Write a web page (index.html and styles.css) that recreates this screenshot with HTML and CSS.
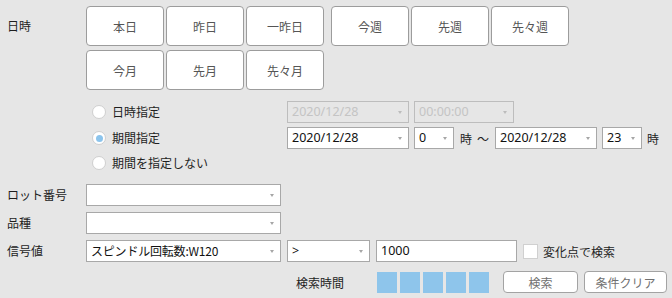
FILE: index.html
```html
<!DOCTYPE html>
<html lang="ja">
<head>
<meta charset="utf-8">
<link rel="stylesheet" href="styles.css">
</head>
<body>
<div class="page">
  <div class="dt-row">
    <div class="label dt-label">日時</div>
    <div class="quick">
      <div class="qrow">
        <div class="grp">
          <div class="qbtn">本日</div>
          <div class="qbtn">昨日</div>
          <div class="qbtn">一昨日</div>
        </div>
        <div class="grp">
          <div class="qbtn">今週</div>
          <div class="qbtn">先週</div>
          <div class="qbtn">先々週</div>
        </div>
      </div>
      <div class="qrow">
        <div class="grp">
          <div class="qbtn">今月</div>
          <div class="qbtn">先月</div>
          <div class="qbtn">先々月</div>
        </div>
      </div>
    </div>
  </div>

  <div class="radios">
    <div class="rrow">
      <div class="radio"><span class="circle"></span><span class="rtext">日時指定</span></div>
      <div class="sel dis w-date"><span class="val">2020/12/28</span><span class="arrow"></span></div>
      <div class="sel dis w-time"><span class="val">00:00:00</span><span class="arrow"></span></div>
    </div>
    <div class="rrow r2">
      <div class="radio"><span class="circle on"></span><span class="rtext">期間指定</span></div>
      <div class="sel w-date"><span class="val">2020/12/28</span><span class="arrow"></span></div>
      <div class="sel w-hour"><span class="val">0</span><span class="arrow"></span></div>
      <span class="unit">時</span>
      <span class="tilde">～</span>
      <div class="sel w-date2"><span class="val">2020/12/28</span><span class="arrow"></span></div>
      <div class="sel w-hour"><span class="val">23</span><span class="arrow"></span></div>
      <span class="unit u2">時</span>
    </div>
    <div class="rrow r3">
      <div class="radio"><span class="circle"></span><span class="rtext">期間を指定しない</span></div>
    </div>
  </div>

  <div class="frow lot">
    <div class="label">ロット番号</div>
    <div class="sel w-main"><span class="val"></span><span class="arrow"></span></div>
  </div>
  <div class="frow kind">
    <div class="label">品種</div>
    <div class="sel w-main"><span class="val"></span><span class="arrow"></span></div>
  </div>
  <div class="frow sig">
    <div class="label">信号値</div>
    <div class="sel w-main"><span class="val jp">スピンドル回転数:W120</span><span class="arrow"></span></div>
    <div class="sel w-op"><span class="val">&gt;</span><span class="arrow"></span></div>
    <div class="inp"><span class="val">1000</span></div>
    <div class="check"></div>
    <span class="ctext">変化点で検索</span>
  </div>

  <div class="brow">
    <div class="btime">検索時間</div>
    <div class="blocks">
      <span class="blk"></span><span class="blk"></span><span class="blk"></span><span class="blk"></span><span class="blk"></span>
    </div>
    <div class="abtn search">検索</div>
    <div class="abtn clear">条件クリア</div>
  </div>
</div>
</body>
</html>
```

FILE: styles.css
```css
* { box-sizing: border-box; }
html, body {
  margin: 0;
  padding: 0;
  background: #e6e6e6;
}
body {
  width: 672px;
  height: 298px;
  overflow: hidden;
  font-family: "Noto Sans CJK JP", "Noto Sans", sans-serif;
  font-size: 12px;
  color: #1e1e1e;
}
.page {
  padding-top: 6px;
}
.label {
  width: 86px;
  padding-left: 7px;
  flex: none;
  font-size: 12px;
  line-height: 14px;
}
.dt-row {
  display: flex;
}
.dt-label {
  height: 40px;
  display: flex;
  align-items: center;
}
.quick {
  display: flex;
  flex-direction: column;
  gap: 4px;
}
.qrow {
  display: flex;
  gap: 7px;
}
.grp {
  display: flex;
  gap: 2px;
}
.qbtn {
  width: 78px;
  height: 40px;
  background: #fff;
  border: 1px solid #9c9c9c;
  border-radius: 4px;
  display: flex;
  align-items: center;
  justify-content: center;
  color: #555;
  font-size: 12px;
}

.radios {
  margin-top: 11px;
}
.rrow {
  display: flex;
  align-items: center;
  height: 22px;
}
.rrow.r2 { margin-top: 4px; }
.rrow.r3 { margin-top: 3px; }
.radio {
  width: 287px;
  padding-left: 92px;
  display: flex;
  align-items: center;
  flex: none;
}
.circle {
  width: 14px;
  height: 14px;
  border-radius: 50%;
  background: #fff;
  border: 1px solid #cfcfcf;
  display: flex;
  align-items: center;
  justify-content: center;
  flex: none;
}
.circle.on::after {
  content: "";
  width: 7px;
  height: 7px;
  border-radius: 50%;
  background: #8cc4ec;
}
.rtext {
  margin-left: 6px;
  line-height: 14px;
}

.sel, .inp {
  position: relative;
  height: 22px;
  background: #fff;
  border: 1px solid #a8a8a8;
  display: flex;
  align-items: center;
  padding-left: 4px;
  flex: none;
  font-family: "Noto Sans", "Noto Sans CJK JP", sans-serif;
  font-size: 12.5px;
  color: #111;
}
.sel .val, .inp .val {
  line-height: 16px;
  white-space: nowrap;
}
.sel .val.jp {
  font-family: "Noto Sans CJK JP", sans-serif;
  font-size: 12px;
  letter-spacing: -0.2px;
}
.sel.dis {
  background: #e6e6e6;
  border-color: #bdbdbd;
  color: #c4c4c4;
}
.arrow {
  position: absolute;
  right: 6px;
  top: 9px;
  width: 0;
  height: 0;
  border-left: 2.5px solid transparent;
  border-right: 2.5px solid transparent;
  border-top: 3px solid #a6a6a6;
}
.sel.dis .arrow { border-top-color: #bcbcbc; }
.w-date { width: 122px; }
.w-time { width: 100px; margin-left: 5px; }
.w-hour { width: 40px; margin-left: 5px; }
.w-date2 { width: 102px; margin-left: 6px; }
.unit {
  margin-left: 6px;
  width: 12px;
}
.unit.u2 { margin-left: 5px; }
.tilde {
  margin-left: 5px;
  width: 12px;
}

.frow {
  display: flex;
  align-items: center;
  height: 22px;
}
.frow.lot { margin-top: 10px; }
.frow.kind { margin-top: 6px; }
.frow.sig { margin-top: 6px; }
.w-main { width: 195px; }
.w-op { width: 83px; margin-left: 6px; }
.inp { width: 141px; margin-left: 6px; }
.check {
  width: 15px;
  height: 15px;
  margin-left: 6px;
  background: #fff;
  border: 1px solid #d0d0d0;
  flex: none;
}
.ctext {
  margin-left: 5px;
}

.brow {
  display: flex;
  align-items: center;
  margin-top: 9px;
  height: 22px;
  padding-left: 296px;
}
.btime {
  width: 81px;
  flex: none;
}
.blocks {
  display: flex;
  gap: 3px;
}
.blk {
  width: 20px;
  height: 21px;
  background: #8ec5eb;
}
.abtn {
  height: 22px;
  background: #fff;
  border: 1px solid #a3a3a3;
  border-radius: 4px;
  display: flex;
  align-items: center;
  justify-content: center;
  color: #707070;
}
.abtn.search { width: 75px; margin-left: 14px; }
.abtn.clear { width: 83px; margin-left: 6px; }
```
